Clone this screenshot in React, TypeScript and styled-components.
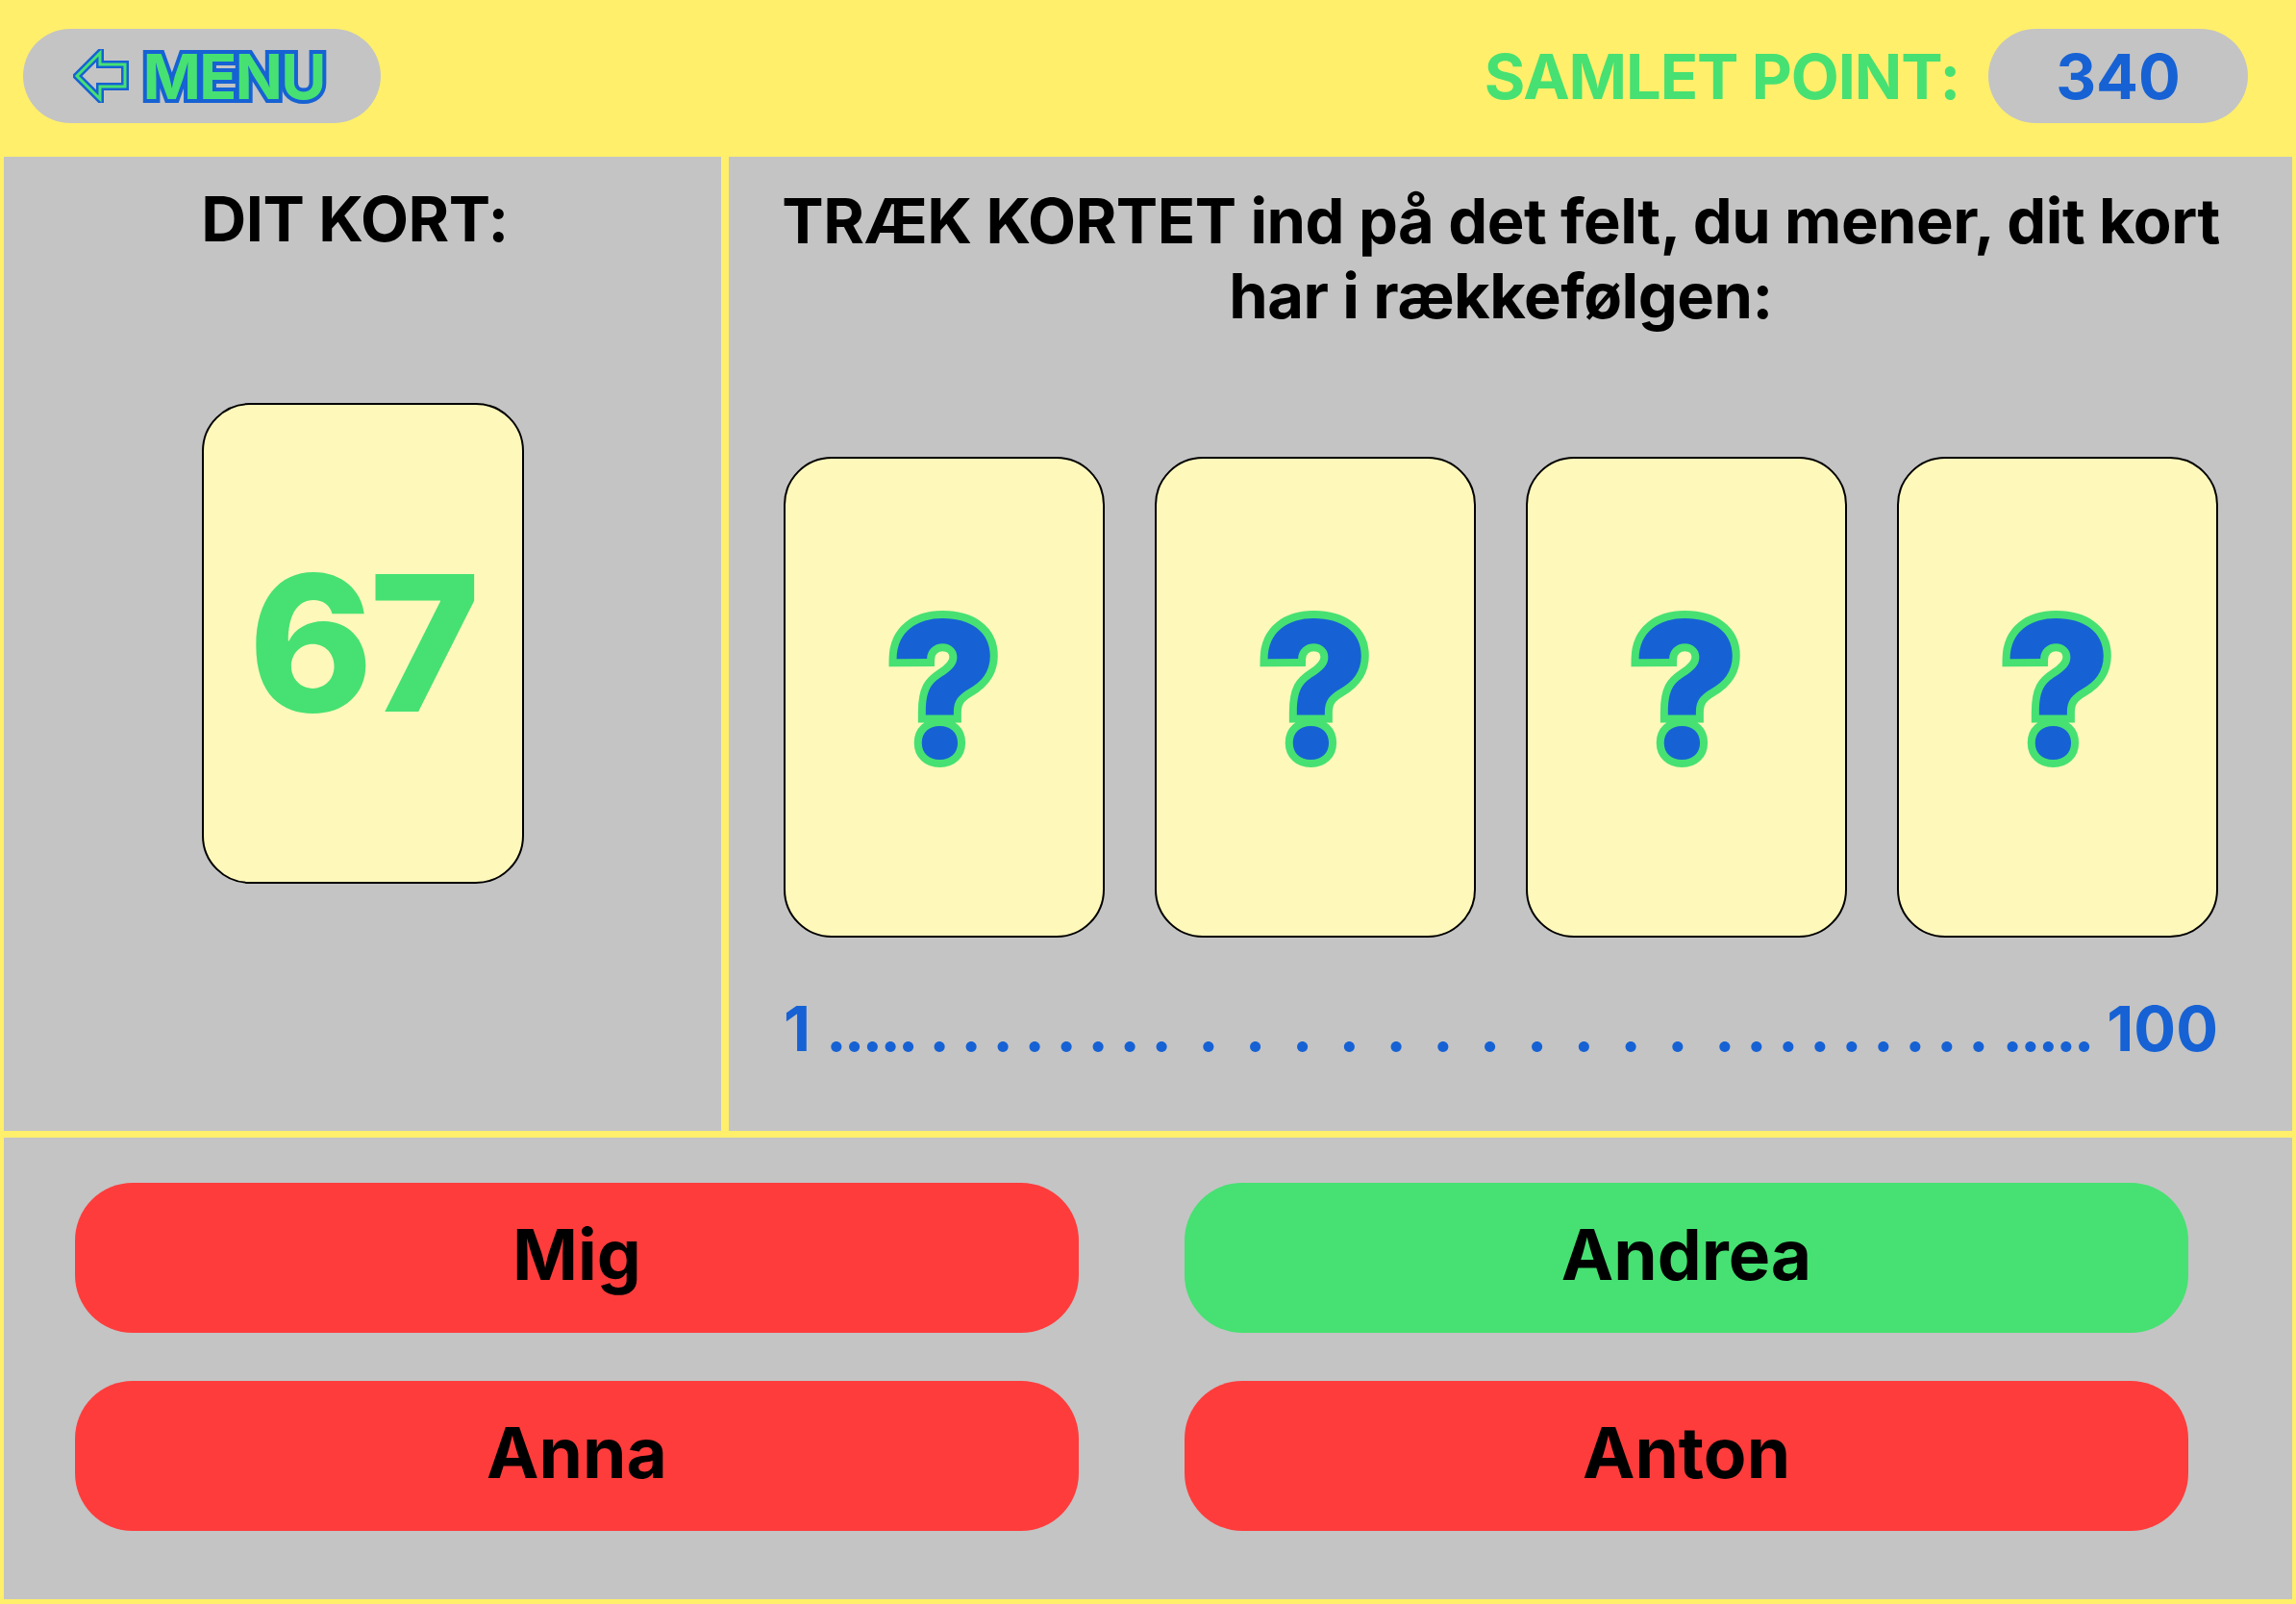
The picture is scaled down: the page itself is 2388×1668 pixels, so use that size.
import React from "react";
import styled, { createGlobalStyle } from "styled-components";

const YELLOW = "#FFEF6B";
const GREY = "#C4C4C4";
const CARD = "#FFF8BB";
const GREEN = "#46E172";
const BLUE = "#1662D4";
const RED = "#FF3C3C";

const GlobalStyle = createGlobalStyle`
  html, body { margin: 0; padding: 0; overflow: hidden; }
  body {
    background: ${YELLOW};
    font-family: Inter, "Noto Sans", "Liberation Sans", sans-serif;
  }
  * { box-sizing: border-box; }
`;

const Page = styled.div`
  width: 2388px;
  height: 1668px;
  background: ${YELLOW};
  display: flex;
  flex-direction: column;
  overflow: hidden;
`;

const Header = styled.header`
  height: 163px;
  flex: none;
  display: flex;
  align-items: flex-start;
  justify-content: space-between;
  padding: 30px 50px 0 24px;
`;

const MenuButton = styled.button`
  width: 372px;
  height: 98px;
  border: none;
  border-radius: 49px;
  background: ${GREY};
  display: flex;
  align-items: center;
  justify-content: center;
  gap: 14px;
  padding: 0 8px 0 2px;
  cursor: pointer;
  font-family: Inter, "Noto Sans", sans-serif;
`;

const MenuText = styled.span`
  font-size: 65px;
  font-weight: 700;
  line-height: 1;
  color: ${GREEN};
  -webkit-text-stroke: 8px ${BLUE};
  paint-order: stroke fill;
  letter-spacing: -2px;
`;

const ScoreArea = styled.div`
  display: flex;
  align-items: center;
  gap: 30px;
  height: 98px;
`;

const ScoreLabel = styled.span`
  font-size: 65px;
  font-weight: 700;
  color: ${GREEN};
  line-height: 1;
  letter-spacing: -1.1px;
`;

const ScorePill = styled.div`
  width: 270px;
  height: 98px;
  border-radius: 49px;
  background: ${GREY};
  display: flex;
  align-items: center;
  justify-content: center;
  font-size: 65px;
  font-weight: 700;
  color: ${BLUE};
  line-height: 1;
`;

const Board = styled.main`
  flex: 1;
  display: grid;
  grid-template-columns: 746px minmax(0, 1fr);
  grid-template-rows: 1013px 480px;
  gap: 7px 8px;
  padding: 0 4px 5px;
`;

const Panel = styled.section`
  background: ${GREY};
  display: flex;
  flex-direction: column;
  min-width: 0;
`;

const LeftPanel = styled(Panel)`
  align-items: center;
  padding-top: 26px;
`;

const RightPanel = styled(Panel)`
  padding: 28px 77px 0 57px;
`;

const Heading = styled.h2<{ $shift?: number; $bleed?: number }>`
  margin: 0 ${(p) => (p.$shift ?? 0) - (p.$bleed ?? 0)}px 0 ${(p) => -(p.$bleed ?? 0)}px;
  font-size: 65px;
  font-weight: 700;
  line-height: 78px;
  color: #000;
  text-align: center;
  letter-spacing: -0.5px;
  white-space: nowrap;
`;

const Card = styled.div<{ $lift?: number }>`
  width: 334px;
  height: 500px;
  flex: none;
  background: ${CARD};
  border: 2px solid #000;
  border-radius: 50px;
  display: flex;
  align-items: center;
  justify-content: center;
  padding-bottom: ${(p) => p.$lift ?? 0}px;
`;

const MyCard = styled(Card)`
  width: 335px;
  margin-top: 152px;
`;

const CardNumber = styled.span`
  font-size: 196px;
  font-weight: 800;
  line-height: 1;
  color: ${GREEN};
  letter-spacing: -4px;
`;

const Question = styled.span`
  font-size: 196px;
  font-weight: 800;
  line-height: 1;
  color: ${BLUE};
  -webkit-text-stroke: 16px ${GREEN};
  paint-order: stroke fill;
`;

const CardRow = styled.div`
  margin-top: 128px;
  display: flex;
  gap: 52px;
`;

const NumberLine = styled.div`
  margin-top: 56px;
  display: flex;
  align-items: baseline;
  justify-content: space-between;
  color: ${BLUE};
  font-size: 65px;
  font-weight: 700;
  line-height: 78px;
`;

const Leader = styled.span`
  display: flex;
  gap: 8px;
`;

const Dot = styled.span<{ $pitch: number }>`
  display: inline-block;
  width: ${(p) => p.$pitch}px;
  text-align: center;
`;

const PlayersPanel = styled.section`
  grid-column: 1 / -1;
  background: ${GREY};
  display: grid;
  grid-template-columns: 1044px 1044px;
  grid-auto-rows: 156px;
  column-gap: 110px;
  row-gap: 50px;
  padding: 47px 109px 71px 74px;
`;

const PlayerButton = styled.button<{ $active?: boolean }>`
  border: none;
  border-radius: 60px;
  background: ${(p) => (p.$active ? GREEN : RED)};
  color: #000;
  font-family: Inter, "Noto Sans", sans-serif;
  font-size: 73px;
  font-weight: 700;
  line-height: 1;
  display: flex;
  align-items: center;
  justify-content: center;
  padding: 0 0 8px;
  cursor: pointer;
`;

const ARROW = "4,28 28,4 28,16 54,16 54,39 28,39 28,52";

const ArrowIcon = () => (
  <svg width="58" height="56" viewBox="0 0 58 56" aria-hidden="true">
    <polygon points={ARROW} fill="none" stroke={BLUE} strokeWidth="8" />
    <polygon points={ARROW} fill="none" stroke={GREEN} strokeWidth="3" />
  </svg>
);

const DotRun = ({ n, pitch }: { n: number; pitch: number }) => (
  <span>
    {Array.from({ length: n }, (_, i) => (
      <Dot key={i} $pitch={pitch}>.</Dot>
    ))}
  </span>
);

const players = [
  { name: "Mig", active: false },
  { name: "Andrea", active: true },
  { name: "Anna", active: false },
  { name: "Anton", active: false },
];

export default function App() {
  return (
    <>
      <GlobalStyle />
      <Page>
        <Header>
          <MenuButton>
            <ArrowIcon />
            <MenuText>MENU</MenuText>
          </MenuButton>
          <ScoreArea>
            <ScoreLabel>SAMLET POINT:</ScoreLabel>
            <ScorePill>340</ScorePill>
          </ScoreArea>
        </Header>
        <Board>
          <LeftPanel>
            <Heading $shift={16}>DIT KORT:</Heading>
            <MyCard>
              <CardNumber>67</CardNumber>
            </MyCard>
          </LeftPanel>
          <RightPanel>
            <Heading $bleed={30}>
              TRÆK KORTET ind på det felt, du mener, dit kort
              <br />
              har i rækkefølgen:
            </Heading>
            <CardRow>
              {[0, 1, 2, 3].map((i) => (
                <Card key={i} $lift={16}>
                  <Question>?</Question>
                </Card>
              ))}
            </CardRow>
            <NumberLine>
              <span>1</span>
              <Leader>
                <DotRun n={5} pitch={18.7} />
                <DotRun n={8} pitch={33} />
                <DotRun n={11} pitch={48.8} />
                <DotRun n={9} pitch={33} />
                <DotRun n={5} pitch={18.6} />
              </Leader>
              <span>100</span>
            </NumberLine>
          </RightPanel>
          <PlayersPanel>
            {players.map((p) => (
              <PlayerButton key={p.name} $active={p.active}>
                {p.name}
              </PlayerButton>
            ))}
          </PlayersPanel>
        </Board>
      </Page>
    </>
  );
}
